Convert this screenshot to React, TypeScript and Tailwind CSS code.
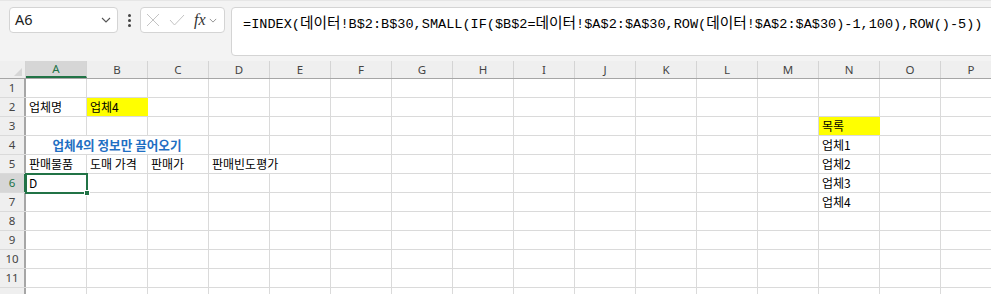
import React from 'react';

const COLS = ['A', 'B', 'C', 'D', 'E', 'F', 'G', 'H', 'I', 'J', 'K', 'L', 'M', 'N', 'O', 'P'];

type CellDef = { col: number; span?: number; text?: string; cls?: string };

// sheet contents, keyed by row number
const DATA: Record<number, CellDef[]> = {
    2: [
        { col: 0, text: '업체명' },
        { col: 1, text: '업체4', cls: 'bg-[#ffff00] border-[#ffff00]' },
    ],
    3: [{ col: 13, text: '목록', cls: 'bg-[#ffff00] border-[#ffff00]' }],
    4: [
        { col: 0, span: 3, text: '업체4의 정보만 끌어오기', cls: 'justify-center !pl-0 font-bold !text-[12.6px] !text-[#1f6fc3]' },
        { col: 13, text: '업체1' },
    ],
    5: [
        { col: 0, text: '판매물품' },
        { col: 1, text: '도매 가격' },
        { col: 2, text: '판매가' },
        { col: 3, span: 2, text: '판매빈도평가' },
        { col: 13, text: '업체2' },
    ],
    6: [
        { col: 0, text: 'D' },
        { col: 13, text: '업체3' },
    ],
    7: [{ col: 13, text: '업체4' }],
};

const cellFont = { fontFamily: '"Noto Sans CJK KR", "Noto Sans", sans-serif' };
const headFont = { fontFamily: '"Noto Sans", "Open Sans", sans-serif' };

const Cell = ({ span = 1, text, cls = '' }: { span?: number; text?: string; cls?: string }) => {
    const w = span === 3 ? 'w-[183px]' : span === 2 ? 'w-[122px]' : 'w-[61px]';
    return (
        <div className={`${w} shrink-0 h-full border-r border-[#dadada] flex items-center pl-[3px] whitespace-nowrap text-[12px] leading-none text-black ${cls}`}>
            {text}
        </div>
    );
};

const SheetRow = ({ n, label = true }: { n: number; label?: boolean }) => {
    const defs = DATA[n] || [];
    const cells: React.ReactNode[] = [];
    let c = 0;
    while (c < COLS.length) {
        const d = defs.find((x) => x.col === c);
        if (d) {
            cells.push(<Cell key={c} span={d.span} text={d.text} cls={d.cls} />);
            c += d.span || 1;
        } else {
            cells.push(<Cell key={c} />);
            c += 1;
        }
    }
    const active = n === 6;
    return (
        <div className="flex h-[19px] shrink-0 border-b border-[#dadada]" style={cellFont}>
            <div
                className={`w-[26px] shrink-0 h-full flex items-center justify-center text-[11.5px] leading-none border-r-2 ${active
                    ? 'bg-[#d6d6d6] text-[#217346] border-[#217346]'
                    : 'bg-[#efefef] text-[#444] border-[#a6a6a6] border-r'
                    }`}
                style={headFont}
            >
                {label ? n : null}
            </div>
            {cells}
        </div>
    );
};

const Chevron = ({ className = '' }: { className?: string }) => (
    <svg viewBox="0 0 10 6" className={className} fill="none" stroke="currentColor" strokeWidth="1.1">
        <path d="M1 1l4 4 4-4" />
    </svg>
);

export default function App() {
    return (
        <div className="w-[991px] h-[294px] overflow-hidden bg-white relative">
            {/* formula bar */}
            <div className="h-[61px] bg-[#f3f3f3] border-t border-[#e6e6e6] flex items-start pl-[9px] pt-[6px] overflow-hidden">
                <div className="w-[109px] h-[26px] shrink-0 bg-white border border-[#d4d4d4] rounded-[4px] flex items-center justify-between pl-[5px] pr-[6px]">
                    <span className="text-[14.5px] text-[#222]" style={headFont}>A6</span>
                    <Chevron className="w-[10px] h-[6px] text-[#555]" />
                </div>
                <div className="w-[22px] h-[26px] shrink-0 flex flex-col items-center justify-center gap-[2px]">
                    <span className="w-[3px] h-[3px] rounded-full bg-[#444]" />
                    <span className="w-[3px] h-[3px] rounded-full bg-[#444]" />
                    <span className="w-[3px] h-[3px] rounded-full bg-[#444]" />
                </div>
                <div className="w-[85px] h-[26px] shrink-0 bg-white border border-[#d4d4d4] rounded-[4px] flex items-center pl-[5px]">
                    <svg viewBox="0 0 14 14" className="w-[14px] h-[14px] text-[#c4c4c4]" fill="none" stroke="currentColor" strokeWidth="1">
                        <path d="M1 1l12 12M13 1L1 13" />
                    </svg>
                    <svg viewBox="0 0 16 12" className="w-[16px] h-[12px] ml-[9px] text-[#c4c4c4]" fill="none" stroke="currentColor" strokeWidth="1">
                        <path d="M1 6l4.5 5L15 1" />
                    </svg>
                    <span className="ml-[9px] italic text-[16px] leading-none text-[#333]" style={{ fontFamily: '"Liberation Serif", serif' }}>fx</span>
                    <Chevron className="ml-[3px] w-[8px] h-[5px] text-[#888]" />
                </div>
                <div className="ml-[6px] flex-1 min-w-[780px] h-[49px] shrink-0 bg-white border border-[#d4d4d4] rounded-[4px] pl-[11px] pt-[5px]">
                    <div className="text-[13.55px] leading-[18px] text-black whitespace-nowrap" style={{ fontFamily: '"Liberation Mono", "Noto Sans CJK KR", monospace' }}>
                        =INDEX(<span className="text-[14.7px]" style={cellFont}>데이터</span>!B$2:B$30,SMALL(IF($B$2=<span className="text-[14.7px]" style={cellFont}>데이터</span>!$A$2:$A$30,ROW(<span className="text-[14.7px]" style={cellFont}>데이터</span>!$A$2:$A$30)-1,100),ROW()-5))
                    </div>
                </div>
            </div>

            {/* column headers */}
            <div className="flex h-[18px] bg-[#efefef] border-b border-[#a6a6a6]" style={headFont}>
                <div className="w-[26px] shrink-0 h-full border-r border-[#d4d4d4] flex items-end justify-end pr-[3px] pb-[2px]">
                    <svg viewBox="0 0 8 8" className="w-[8px] h-[8px]">
                        <path d="M8 0V8H0Z" fill="#d6d6d6" />
                    </svg>
                </div>
                {COLS.map((c, i) => (
                    <div
                        key={c}
                        className={`w-[61px] shrink-0 h-full flex items-center justify-center text-[11.5px] leading-none border-r border-[#d4d4d4] ${i === 0 ? 'bg-[#d6d6d6] text-[#217346] border-b-2 border-b-[#217346]' : 'text-[#444]'}`}
                    >
                        {c}
                    </div>
                ))}
            </div>

            {/* rows */}
            <div className="relative">
                {Array.from({ length: 12 }, (_, i) => (
                    <SheetRow key={i} n={i + 1} label={i < 11} />
                ))}
                {/* active cell A6 */}
                <div className="absolute left-[25px] top-[94px] w-[63px] h-[21px] border-2 border-[#217346]">
                    <div className="absolute right-[-4px] bottom-[-4px] w-[6px] h-[6px] bg-[#217346] border border-white" />
                </div>
            </div>
        </div>
    );
}
